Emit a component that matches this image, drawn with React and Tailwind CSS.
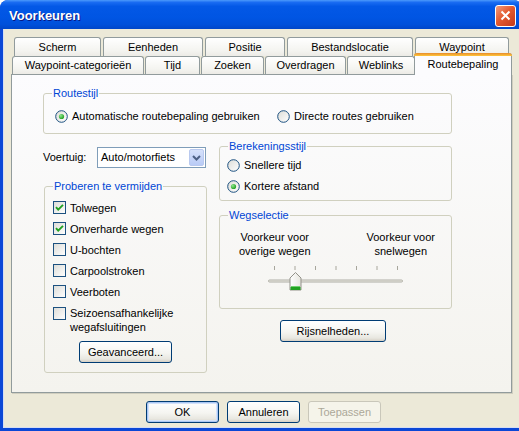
import React from 'react';

function Radio({ checked }) {
  return (
    <svg width="13" height="13" viewBox="0 0 13 13" className="shrink-0">
      <defs>
        <linearGradient id="radioFill" x1="0" y1="0" x2="1" y2="1">
          <stop offset="0" stopColor="#DCDCD7" />
          <stop offset="1" stopColor="#FFFFFF" />
        </linearGradient>
        <radialGradient id="radioDot" cx="0.35" cy="0.35" r="0.7">
          <stop offset="0" stopColor="#8EE68E" />
          <stop offset="1" stopColor="#1E9E1E" />
        </radialGradient>
      </defs>
      <circle cx="6.5" cy="6.5" r="5.8" fill="url(#radioFill)" stroke="#1C5180" strokeWidth="1" />
      {checked && <circle cx="6.5" cy="6.5" r="2.6" fill="url(#radioDot)" />}
    </svg>
  );
}

function Check({ checked }) {
  return (
    <svg width="13" height="13" viewBox="0 0 13 13" className="shrink-0">
      <defs>
        <linearGradient id="checkFill" x1="0" y1="0" x2="1" y2="1">
          <stop offset="0" stopColor="#DCDCD7" />
          <stop offset="1" stopColor="#FFFFFF" />
        </linearGradient>
      </defs>
      <rect x="0.5" y="0.5" width="12" height="12" fill="url(#checkFill)" stroke="#1C5180" />
      {checked && (
        <path d="M3 6.2 L5.2 8.6 L10 3.8" fill="none" stroke="#21A121" strokeWidth="1.9" />
      )}
    </svg>
  );
}

function Group({ title, className, children }) {
  return (
    <fieldset className={`border border-[#D0D0BF] rounded-[3px] ${className}`}>
      <legend className="ml-[8px] px-[1px] leading-[13px] text-[#0046D5]">{title}</legend>
      {children}
    </fieldset>
  );
}

function Btn({ children, className, def, disabled }) {
  const base = 'h-[22px] rounded-[3px] border flex items-center justify-center leading-[13px]';
  if (disabled) {
    return <div className={`${base} ${className} border-[#C9C7BA] bg-[#F5F4EA] text-[#ACA899]`}>{children}</div>;
  }
  return (
    <div
      className={`${base} ${className} border-[#003C74] bg-[linear-gradient(to_bottom,#FFFFFF,#F5F5F1_55%,#E8E7E0_85%,#D6D0C5)] ${
        def ? 'shadow-[inset_0_0_0_1px_#A9C6F3,inset_0_0_0_2px_#D3E2FA]' : ''
      }`}
    >
      {children}
    </div>
  );
}

function Tab({ className, children }) {
  return (
    <div
      className={`${className} h-full border border-b-0 border-[#919B9C] rounded-t-[3px] bg-[linear-gradient(to_bottom,#FFFFFF,#F4F4F0_70%,#ECEBE6)] flex items-center justify-center leading-[13px]`}
    >
      {children}
    </div>
  );
}

function Slider() {
  const ticks = [0, 1, 2, 3, 4, 5, 6].map((i) => 6 + i * 20.5);
  return (
    <svg width="140" height="28" viewBox="0 0 140 28">
      <defs>
        <linearGradient id="thumbFill" x1="0" y1="0" x2="1" y2="0">
          <stop offset="0" stopColor="#FFFFFF" />
          <stop offset="1" stopColor="#E6E5DE" />
        </linearGradient>
      </defs>
      {ticks.map((x) => (
        <line key={x} x1={x + 0.5} y1="2" x2={x + 0.5} y2="6" stroke="#A7A69C" />
      ))}
      <rect x="0.5" y="16" width="134" height="2" rx="1" fill="#F0EFE8" stroke="#9D9C92" strokeWidth="0.8" />
      <path d="M22 14 L27.5 8.5 L33 14 L33 26 L22 26 Z" fill="url(#thumbFill)" stroke="#93928A" />
      <rect x="22.5" y="23" width="10" height="3" fill="#21A121" />
      <rect x="23" y="22" width="9" height="1" fill="#6FD26F" />
    </svg>
  );
}

export default function App() {
  return (
    <div className="w-[519px] h-[431px] overflow-hidden bg-white font-['Liberation_Sans',Arial,sans-serif] text-[11px] text-black">
      <div className="w-[522px] h-[431px] flex flex-col rounded-t-[8px] bg-[#0B47D6]">
        {/* Title bar */}
        <div className="h-[29px] shrink-0 rounded-t-[8px] bg-[linear-gradient(to_bottom,#4C9AFB_0%,#1A6CF2_8%,#0358E6_22%,#0055E3_60%,#0050DA_85%,#0046C8_100%)] flex items-center pl-[9px] pr-[6px]">
          <span className="flex-1 text-white font-bold text-[13px] [text-shadow:1px_1px_#0A1883] pt-[2px]">Voorkeuren</span>
          <div className="w-[21px] h-[22px] mt-[2px] rounded-[3px] border border-white bg-[linear-gradient(135deg,#F09C7E,#E45A30_45%,#C4391A)] flex items-center justify-center">
            <svg width="11" height="11" viewBox="0 0 11 11">
              <path d="M1.5 1.5 L9.5 9.5 M9.5 1.5 L1.5 9.5" stroke="#FFFFFF" strokeWidth="2" />
            </svg>
          </div>
        </div>

        {/* Client area */}
        <div className="flex-1 ml-[3px] mr-[3px] mb-[3px] bg-[#ECE9D8] shadow-[inset_1px_0_0_#D5DDF2,inset_0_-1px_0_#D5DDF2] flex flex-col pt-[8px]">
          {/* Tabs row 1 */}
          <div className="h-[19px] flex pl-[11px] gap-[2px]">
            <Tab className="w-[87px]">Scherm</Tab>
            <Tab className="w-[100px]">Eenheden</Tab>
            <Tab className="w-[80px]">Positie</Tab>
            <Tab className="w-[126px]">Bestandslocatie</Tab>
            <Tab className="w-[94px]">Waypoint</Tab>
          </div>
          {/* Tabs row 2 */}
          <div className="h-[18px] flex items-end pl-[9px] gap-[1px]">
            <Tab className="w-[132px]">Waypoint-categorieën</Tab>
            <Tab className="w-[55px]">Tijd</Tab>
            <Tab className="w-[63px]">Zoeken</Tab>
            <Tab className="w-[81px]">Overdragen</Tab>
            <Tab className="w-[68px]">Weblinks</Tab>
            <div className="w-[98px] h-[22px] -mb-[1px] -ml-[2px] relative z-10 rounded-t-[3px] bg-[#FCFCFE] border-x border-[#919B9C] flex flex-col">
              <div className="h-[3px] -mx-[1px] rounded-t-[3px] bg-[linear-gradient(to_bottom,#E68B2C,#FFC73C)]" />
              <div className="flex-1 flex items-center justify-center leading-[13px] pb-[2px]">Routebepaling</div>
            </div>
          </div>

          {/* Panel */}
          <div className="w-[501px] h-[319px] ml-[8px] border border-[#919B9C] bg-[linear-gradient(to_bottom,#FCFCFE,#F4F3EE)] shadow-[1px_1px_0_#D0CEBF] pt-[12px] pl-[31px]">
            <Group title="Routestijl" className="w-[409px]">
              <div className="flex items-center pt-[10px] pb-[10px] pl-[11px] leading-[13px]">
                <div className="w-[222px] flex items-center gap-[4px]">
                  <Radio checked />
                  <span>Automatische routebepaling gebruiken</span>
                </div>
                <div className="flex items-center gap-[4px]">
                  <Radio />
                  <span>Directe routes gebruiken</span>
                </div>
              </div>
            </Group>

            <div className="flex items-start gap-[12px] mt-[6px]">
              {/* Left column */}
              <div className="w-[164px] pt-[7px]">
                <div className="h-[21px] flex items-center">
                  <span className="w-[54px]">Voertuig:</span>
                  <div className="w-[109px] h-[21px] border border-[#7F9DB9] bg-white flex items-center pl-[3px] pr-[1px]">
                    <span className="flex-1">Auto/motorfiets</span>
                    <div className="w-[15px] h-[17px] rounded-[2px] border border-[#B9C9EF] bg-[linear-gradient(to_bottom,#D6E1FB,#B9CBF6)] flex items-center justify-center">
                      <svg width="9" height="6" viewBox="0 0 9 6">
                        <path d="M1 1 L4.5 4.5 L8 1" fill="none" stroke="#4D6185" strokeWidth="2" />
                      </svg>
                    </div>
                  </div>
                </div>

                <Group title="Proberen te vermijden" className="w-[163px] ml-[1px] mt-[12px]">
                  <div className="pt-[4px] pl-[8px] pb-[9px] leading-[14px]">
                    <div className="h-[21px] flex items-center gap-[4px]"><Check checked /><span>Tolwegen</span></div>
                    <div className="h-[21px] flex items-center gap-[4px]"><Check checked /><span>Onverharde wegen</span></div>
                    <div className="h-[21px] flex items-center gap-[4px]"><Check /><span>U-bochten</span></div>
                    <div className="h-[21px] flex items-center gap-[4px]"><Check /><span>Carpoolstroken</span></div>
                    <div className="h-[21px] flex items-center gap-[4px]"><Check /><span>Veerboten</span></div>
                    <div className="flex items-start gap-[4px] pt-[4px]">
                      <div className="mt-[1px]"><Check /></div>
                      <span>Seizoensafhankelijke<br />wegafsluitingen</span>
                    </div>
                    <Btn className="w-[93px] mt-[7px] ml-[26px]">Geavanceerd...</Btn>
                  </div>
                </Group>
              </div>

              {/* Right column */}
              <div className="w-[233px]">
                <Group title="Berekeningsstijl" className="w-[233px]">
                  <div className="pt-[2px] pb-[3px] pl-[7px] leading-[13px]">
                    <div className="h-[21px] flex items-center gap-[4px]"><Radio /><span>Snellere tijd</span></div>
                    <div className="h-[21px] flex items-center gap-[4px]"><Radio checked /><span>Kortere afstand</span></div>
                  </div>
                </Group>

                <Group title="Wegselectie" className="w-[233px] mt-[8px]">
                  <div className="pt-[8px] pb-[16px]">
                    <div className="flex justify-between pl-[19px] pr-[16px] leading-[14px] text-center">
                      <span>Voorkeur voor<br />overige wegen</span>
                      <span>Voorkeur voor<br />snelwegen</span>
                    </div>
                    <div className="mt-[6px] pl-[48px]">
                      <Slider />
                    </div>
                  </div>
                </Group>

                <Btn className="w-[106px] mt-[11px] ml-[61px]">Rijsnelheden...</Btn>
              </div>
            </div>
          </div>

          {/* Dialog buttons */}
          <div className="flex justify-center gap-[8px] mt-[8px] pl-[5px]">
            <Btn className="w-[73px]" def>OK</Btn>
            <Btn className="w-[73px]">Annuleren</Btn>
            <Btn className="w-[73px]" disabled>Toepassen</Btn>
          </div>
        </div>
      </div>
    </div>
  );
}
